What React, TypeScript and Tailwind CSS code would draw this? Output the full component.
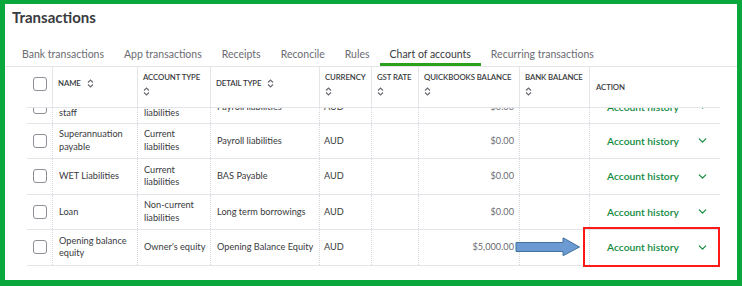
import React from "react";
import { ChevronDown } from "lucide-react";

const COLS = "grid grid-cols-[25px_85px_73px_109px_52px_47px_101px_70px_131px]";

const SortIcon = () => (
  <svg width="7" height="9" viewBox="0 0 7 9" className="shrink-0">
    <path d="M1 3.5 L3.5 1 L6 3.5" fill="none" stroke="#6b6c72" strokeWidth="1.2" />
    <path d="M1 5.5 L3.5 8 L6 5.5" fill="none" stroke="#6b6c72" strokeWidth="1.2" />
  </svg>
);

const Checkbox = () => (
  <div className="w-[14px] h-[14px] rounded-[3px] border border-[#8d9096] bg-white" />
);

type Row = {
  name: string[];
  type: string[];
  detail: string;
  amount: string;
};

const rows: Row[] = [
  { name: ["Amounts owed to", "staff"], type: ["Current", "liabilities"], detail: "Payroll liabilities", amount: "$0.00" },
  { name: ["Superannuation", "payable"], type: ["Current", "liabilities"], detail: "Payroll liabilities", amount: "$0.00" },
  { name: ["WET Liabilities"], type: ["Current", "liabilities"], detail: "BAS Payable", amount: "$0.00" },
  { name: ["Loan"], type: ["Non-current", "liabilities"], detail: "Long term borrowings", amount: "$0.00" },
  { name: ["Opening balance", "equity"], type: ["Owner's equity"], detail: "Opening Balance Equity", amount: "$5,000.00" },
];

const tabs = [
  "Bank transactions",
  "App transactions",
  "Receipts",
  "Reconcile",
  "Rules",
  "Chart of accounts",
  "Recurring transactions",
];

const Head = ({ label, sort, twoLine }: { label: string; sort?: boolean; twoLine?: boolean }) => (
  <div
    className={`border-l border-[#e3e5e8] px-[5px] flex whitespace-nowrap ${
      twoLine ? "flex-col justify-center gap-[4px] pb-[7px]" : "items-center gap-[6px] pb-[7px]"
    }`}
  >
    <span className="leading-[11px]">{label}</span>
    {sort && <SortIcon />}
  </div>
);

const cell = "border-l border-dotted border-[#d4d7dc] whitespace-nowrap";

export default function App() {
  return (
    <div
      className="relative w-[742px] h-[286px] overflow-hidden bg-white border-[#0aa83c] border-t-4 border-l-[5px] border-r-[5px] border-b-[6px] text-[#393a3d]"
      style={{ fontFamily: "Lato, 'Noto Sans', sans-serif" }}
    >
      <div className="pl-[7px] pt-[3px] h-[23px] text-[15px] font-bold leading-[20px]">Transactions</div>

      <div className="flex pl-[7px] mt-[14px] h-[26px] text-[10.5px] border-b border-[#e3e5e8]">
        {tabs.map((t) => (
          <div
            key={t}
            className={`px-[10px] flex items-start pt-[6px] ${
              t === "Chart of accounts" ? "text-[#393a3d] border-b-[3px] border-[#2ca01c]" : "text-[#6b6c72]"
            }`}
          >
            {t}
          </div>
        ))}
      </div>

      <div className="ml-[22px] w-[693px]">
        <div className={`${COLS} h-[41px] text-[7.8px] tracking-[-0.1px] font-semibold border-b border-[#e3e5e8]`}>
          <div className="flex items-center justify-center pb-[6px]">
            <Checkbox />
          </div>
          <Head label="NAME" sort />
          <Head label="ACCOUNT TYPE" sort twoLine />
          <Head label="DETAIL TYPE" sort />
          <Head label="CURRENCY" sort twoLine />
          <Head label="GST RATE" sort twoLine />
          <Head label="QUICKBOOKS BALANCE" sort twoLine />
          <Head label="BANK BALANCE" sort twoLine />
          <div className="border-l border-[#e3e5e8] px-[6px] flex items-center pt-[1px]">ACTION</div>
        </div>

        <div className="h-[158px] overflow-hidden">
          <div className="-mt-[20px] text-[9.2px] leading-[12.5px]">
            {rows.map((r, i) => (
              <div key={i} className={`${COLS} h-[35.5px] border-b border-[#e3e5e8] ${i === 0 ? "pt-[3px]" : ""}`}>
                <div className="flex items-center justify-center">
                  <Checkbox />
                </div>
                <div className={`${cell} px-[6px] flex flex-col justify-center`}>
                  {r.name.map((n) => (
                    <span key={n}>{n}</span>
                  ))}
                </div>
                <div className={`${cell} px-[6px] flex flex-col justify-center`}>
                  {r.type.map((n) => (
                    <span key={n}>{n}</span>
                  ))}
                </div>
                <div className={`${cell} px-[6px] flex items-center`}>{r.detail}</div>
                <div className={`${cell} px-[4px] flex items-center`}>AUD</div>
                <div className={cell} />
                <div className={`${cell} pr-[5px] flex items-center justify-end text-[#6b6c72]`}>{r.amount}</div>
                <div className={cell} />
                <div className={`${cell} pl-[17px] flex items-center text-[10.3px] font-semibold text-[#108a3c]`}>
                  <span className="w-[89px]">Account history</span>
                  <ChevronDown size={13} strokeWidth={2.2} className="text-[#108a3c]" />
                </div>
              </div>
            ))}
          </div>
        </div>
      </div>

      <svg className="absolute left-[510px] top-[233px]" width="66" height="20" viewBox="0 0 66 20">
        <path d="M1 5.5 H48 V1 H48.5 L64.5 10 L48.5 18.5 H48 V14.5 H1 Z" fill="#6b9bd2" stroke="#41719c" strokeWidth="1" />
      </svg>
      <div className="absolute left-[578px] top-[223px] w-[137px] h-[40px] border-2 border-[#ff1a1a]" />
    </div>
  );
}
